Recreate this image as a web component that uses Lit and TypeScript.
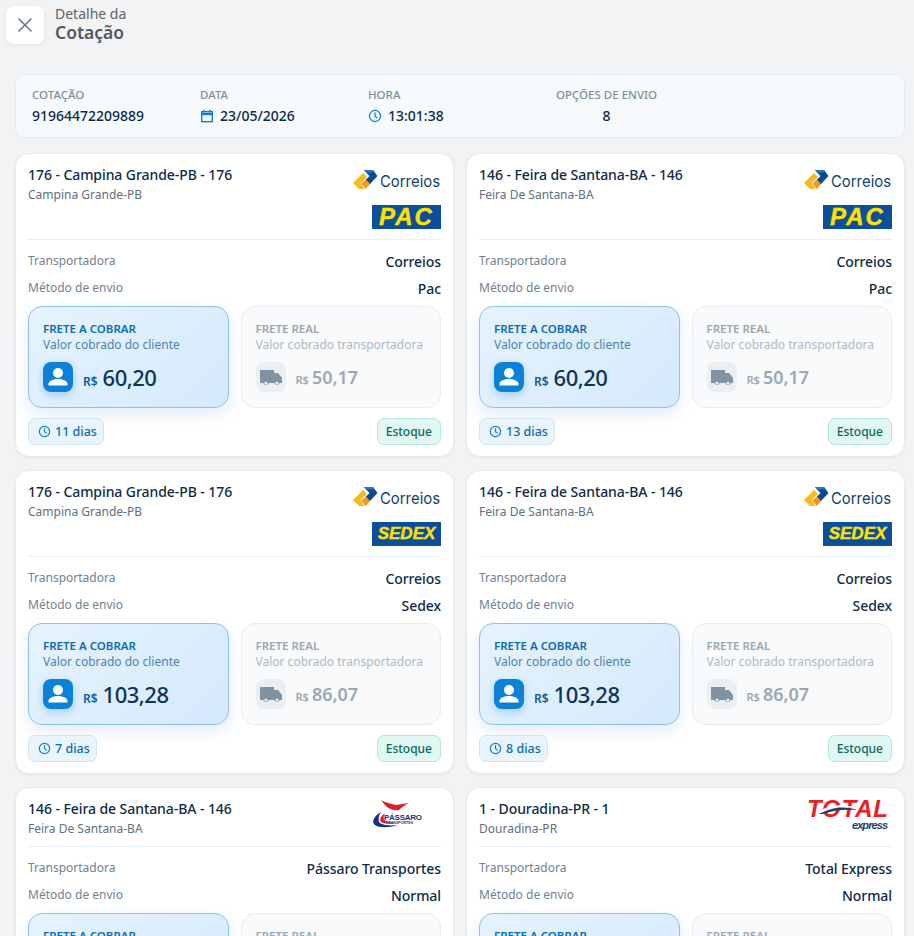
import { LitElement, css, html, svg } from "lit";
import { customElement } from "lit/decorators.js";

type Logo = "pac" | "sedex" | "passaro" | "total";

interface Quote {
  title: string;
  city: string;
  carrier: string;
  method: string;
  charged: string;
  real: string;
  days: string;
  logo: Logo;
}

const quotes: Quote[] = [
  { title: "176 - Campina Grande-PB - 176", city: "Campina Grande-PB", carrier: "Correios", method: "Pac", charged: "60,20", real: "50,17", days: "11 dias", logo: "pac" },
  { title: "146 - Feira de Santana-BA - 146", city: "Feira De Santana-BA", carrier: "Correios", method: "Pac", charged: "60,20", real: "50,17", days: "13 dias", logo: "pac" },
  { title: "176 - Campina Grande-PB - 176", city: "Campina Grande-PB", carrier: "Correios", method: "Sedex", charged: "103,28", real: "86,07", days: "7 dias", logo: "sedex" },
  { title: "146 - Feira de Santana-BA - 146", city: "Feira De Santana-BA", carrier: "Correios", method: "Sedex", charged: "103,28", real: "86,07", days: "8 dias", logo: "sedex" },
  { title: "146 - Feira de Santana-BA - 146", city: "Feira De Santana-BA", carrier: "Pássaro Transportes", method: "Normal", charged: "71,40", real: "59,50", days: "9 dias", logo: "passaro" },
  { title: "1 - Douradina-PR - 1", city: "Douradina-PR", carrier: "Total Express", method: "Normal", charged: "68,10", real: "56,75", days: "10 dias", logo: "total" },
];

const clock = (size: number) => html`<svg width=${size} height=${size} viewBox="0 0 24 24" fill="none" stroke="#0b7fd6" stroke-width="2.2" stroke-linecap="round">
  <circle cx="12" cy="12" r="9.5"></circle><path d="M12 6.5V12.5L15.5 15"></path>
</svg>`;

const correios = svg`<svg width="88" height="22" viewBox="0 0 88 22">
  <path d="M0 14 10 4 14 8 7.500 14 11.500 20H6Z" fill="#f9b91c"></path>
  <path d="M8.500 14.500 14 9.500 18 14 12.500 20Z" fill="#f7941d"></path>
  <path d="M11 1H20L24.500 7 17 15 13 10.500 16.500 7 13.500 4Z" fill="#0b4a8f"></path>
  <path d="M11 1H20L21.500 3 14 4Z" fill="#1f78c8"></path>
  <text x="27" y="18" font-family="Inter, 'Noto Sans', sans-serif" font-size="16" fill="#0d3f6e" textLength="60" lengthAdjust="spacingAndGlyphs">Correios</text>
</svg>`;

const passaro = svg`<svg width="52" height="31" viewBox="0 0 52 31">
  <path d="M9 1C14 4 20 5 24 6C29 5 33 5 37 4C33 6 30 8 27 11C22 12 18 10 15 8C13 6 11 4 9 1Z" fill="#e01f26"></path>
  <path d="M9 13C2 17-1 23 3 26C7 29 17 29 26 26C17 27 9 26 7 23C6 20 7 16 9 13Z" fill="#1b2f7c"></path>
  <path d="M13 14C9 17 7 20 9 23C12 25 18 25 24 24C18 24 13 23 12 20C11 18 12 16 13 14Z" fill="#d8232a"></path>
  <text x="12" y="20.500" font-family="'Liberation Sans', sans-serif" font-size="8" font-weight="700" fill="#1b2f7c" textLength="38">PÁSSARO</text>
  <text x="14" y="25" font-family="'Liberation Sans', sans-serif" font-size="3.500" font-weight="700" fill="#1b2f7c" textLength="27">TRANSPORTES</text>
</svg>`;

const total = svg`<svg width="82" height="32" viewBox="0 0 82 32">
  <text x="0" y="18" font-family="'Liberation Sans', sans-serif" font-size="24" font-weight="700" font-style="italic" fill="#ee1c25" textLength="81">TOTAL</text>
  <path d="M12 15C24 7 38 7 50 11C38 10 26 11 16 15Z" fill="#17406f"></path>
  <path d="M12 12C24 5 38 5 50 9L50 10C38 7 26 8 14 14Z" fill="#fff"></path>
  <text x="45" y="30" font-family="'Liberation Sans', sans-serif" font-size="11" font-weight="700" font-style="italic" fill="#17406f" textLength="36">express</text>
</svg>`;

@customElement("app-root")
export class AppRoot extends LitElement {
  static styles = css`
    :host {
      display: block;
      height: 936px;
      overflow: hidden;
      background: #f1f3f5;
      font-family: "Noto Sans", sans-serif;
      color: #0d2b45;
    }
    .page {
      padding: 6px 9px 0 15px;
    }
    header {
      display: flex;
      gap: 11px;
      margin-left: -9px;
      height: 68px;
    }
    .close {
      width: 38px;
      height: 38px;
      background: #fff;
      border-radius: 8px;
      box-shadow: 0 1px 4px rgba(20, 40, 60, 0.07);
      display: flex;
      align-items: center;
      justify-content: center;
    }
    .heading {
      margin-top: -1px;
      line-height: 1;
    }
    .heading small {
      display: block;
      font-size: 14px;
      line-height: 17px;
      color: #5f6468;
    }
    .heading strong {
      display: block;
      font-size: 17.5px;
      line-height: 21px;
      font-weight: 600;
      color: #54585c;
    }
    .summary {
      display: grid;
      grid-template-columns: 168px 168px 188px auto;
      justify-content: start;
      height: 64px;
      box-sizing: border-box;
      padding: 12px 16px 0;
      background: #f6fafd;
      border: 1px solid #e3ecf3;
      border-radius: 10px;
      margin-bottom: 15px;
    }
    .summary label {
      display: block;
      font-size: 11.5px;
      line-height: 15px;
      font-weight: 500;
      color: #7d8f9f;
    }
    .summary div div {
      display: flex;
      align-items: center;
      gap: 6px;
      margin-top: 4px;
      font-size: 14px;
      line-height: 20px;
      font-weight: 500;
      color: #0d2b45;
    }
    .summary .center {
      text-align: center;
    }
    .summary .center div {
      justify-content: center;
    }
    .grid {
      display: grid;
      grid-template-columns: 1fr 1fr;
      gap: 13px 12px;
    }
    .card {
      box-sizing: border-box;
      background: #fff;
      border: 1px solid #e4ebf1;
      border-radius: 14px;
      padding: 11px 12px;
      box-shadow: 0 1px 3px rgba(40, 70, 100, 0.06);
    }
    .top {
      display: flex;
      justify-content: space-between;
      align-items: flex-start;
      padding-bottom: 8px;
      border-bottom: 1px solid #e9eff4;
      margin-bottom: 8px;
    }
    .top h3 {
      margin: 0;
      font-size: 14px;
      line-height: 20px;
      font-weight: 500;
      letter-spacing: -0.07px;
      color: #0d2b45;
    }
    .top p {
      margin: 2px 0 0;
      font-size: 12px;
      line-height: 16px;
      color: #5e7080;
    }
    .logos {
      display: flex;
      flex-direction: column;
      align-items: flex-end;
      gap: 14px;
      margin: 4px 0 2px;
    }
    .badge {
      width: 69px;
      height: 24px;
      background: #0b4f9c;
      color: #ffe100;
      font-family: "Liberation Sans", sans-serif;
      font-weight: 700;
      font-style: italic;
      font-size: 24px;
      line-height: 24px;
      text-align: center;
      letter-spacing: 2px;
      -webkit-text-stroke: 0.4px #ffe100;
    }
    .badge.sedex {
      font-size: 17px;
      letter-spacing: 0;
    }
    .logos.free {
      margin: 0;
      height: 39px;
    }
    .logos.passaro {
      margin-right: 17px;
    }
    .logos.total {
      margin-right: 3px;
    }
    .row {
      display: flex;
      justify-content: space-between;
      height: 27px;
      align-items: center;
    }
    .row span {
      font-size: 12px;
      color: #6f8292;
      margin-top: -2px;
    }
    .row b {
      font-size: 14px;
      font-weight: 500;
      letter-spacing: -0.07px;
      color: #0d2b45;
    }
    .panels {
      display: grid;
      grid-template-columns: 1fr 1fr;
      gap: 12px;
      margin-top: 4px;
    }
    .panel {
      box-sizing: border-box;
      height: 102px;
      border-radius: 14px;
      padding: 14px 14px 0;
      border: 1px solid #e6ecf1;
      background: #f8fafc;
    }
    .panel.main {
      border-color: #8fc0e8;
      background: linear-gradient(135deg, #e6f3fe, #d5e9fd);
      box-shadow: 0 6px 16px rgba(40, 120, 200, 0.14);
    }
    .panel h4 {
      margin: 0;
      font-size: 11.5px;
      line-height: 16px;
      font-weight: 600;
      color: #9aa8b4;
    }
    .panel p {
      margin: 0;
      font-size: 12px;
      line-height: 16px;
      color: #adb9c4;
    }
    .panel.main h4 {
      color: #0a6cb5;
    }
    .panel.main p {
      color: #4a84ae;
    }
    .amount {
      display: flex;
      align-items: center;
      gap: 10px;
      margin-top: 9px;
    }
    .tile {
      width: 30px;
      height: 30px;
      border-radius: 8px;
      display: flex;
      align-items: center;
      justify-content: center;
      background: #eceff2;
    }
    .main .tile {
      background: #0b82d8;
      box-shadow: 0 3px 8px rgba(11, 130, 216, 0.3);
    }
    .amount small {
      font-size: 11px;
      font-weight: 600;
      color: #9aa8b4;
      margin-right: 3px;
    }
    .amount em {
      font-style: normal;
      font-size: 18px;
      font-weight: 600;
      color: #9aa8b4;
    }
    .main .amount small {
      font-size: 12px;
      margin-right: 5px;
      color: #0a5c9c;
    }
    .main .amount em {
      font-size: 22px;
      font-weight: 500;
      letter-spacing: -0.5px;
      color: #0b3556;
    }
    .foot {
      display: flex;
      justify-content: space-between;
      margin-top: 10px;
    }
    .chip {
      display: flex;
      align-items: center;
      gap: 4px;
      box-sizing: border-box;
      height: 27px;
      padding: 0 6px 0 9px;
      border-radius: 7px;
      font-size: 12.5px;
      font-weight: 500;
      color: #0a6cb5;
      background: #eaf4fc;
      border: 1px solid #cfe4f5;
    }
    .chip.stock {
      padding: 0 8px;
      font-size: 12px;
      font-weight: 500;
      color: #066b60;
      background: #e0f7f2;
      border-color: #b3e8dc;
    }
  `;

  renderLogo(logo: Logo) {
    if (logo === "pac" || logo === "sedex") {
      return html`<div class="logos">
        ${correios}
        <div class="badge ${logo}">${logo.toUpperCase()}</div>
      </div>`;
    }
    return html`<div class="logos free ${logo}">${logo === "total" ? total : passaro}</div>`;
  }

  renderCard(q: Quote) {
    return html`<div class="card">
      <div class="top">
        <div>
          <h3>${q.title}</h3>
          <p>${q.city}</p>
        </div>
        ${this.renderLogo(q.logo)}
      </div>
      <div class="row"><span>Transportadora</span><b>${q.carrier}</b></div>
      <div class="row"><span>Método de envio</span><b>${q.method}</b></div>
      <div class="panels">
        <div class="panel main">
          <h4>FRETE A COBRAR</h4>
          <p>Valor cobrado do cliente</p>
          <div class="amount">
            <div class="tile">
              <svg width="24" height="24" viewBox="0 0 24 24" fill="#fff"><circle cx="12" cy="8" r="5"></circle><path d="M2.500 20.500v-1.500C2.500 15.500 8 14 12 14s9.500 1.500 9.500 5v1.500Z"></path></svg>
            </div>
            <div><small>R$</small><em>${q.charged}</em></div>
          </div>
        </div>
        <div class="panel">
          <h4>FRETE REAL</h4>
          <p>Valor cobrado transportadora</p>
          <div class="amount">
            <div class="tile">
              <svg width="24" height="24" viewBox="0 0 24 24" fill="#7f93a5"><path d="M1 5h14v3h4l4 5v5h-2.200a3 3 0 0 1-5.600 0H9.800a3 3 0 0 1-5.600 0H1Z"></path><circle cx="7" cy="18" r="1.600" fill="#eceff2"></circle><circle cx="18" cy="18" r="1.600" fill="#eceff2"></circle></svg>
            </div>
            <div><small>R$</small><em>${q.real}</em></div>
          </div>
        </div>
      </div>
      <div class="foot">
        <div class="chip">${clock(13)}${q.days}</div>
        <div class="chip stock">Estoque</div>
      </div>
    </div>`;
  }

  render() {
    return html`<div class="page">
      <header>
        <div class="close">
          <svg width="16" height="16" viewBox="0 0 16 16" stroke="#5e7a8e" stroke-width="1.600" stroke-linecap="round"><path d="M2 2 14 14M14 2 2 14"></path></svg>
        </div>
        <div class="heading"><small>Detalhe da</small><strong>Cotação</strong></div>
      </header>
      <section class="summary">
        <div><label>COTAÇÃO</label><div>91964472209889</div></div>
        <div>
          <label>DATA</label>
          <div><svg width="14" height="14" viewBox="0 0 14 14" fill="none" stroke="#0b7fd6" stroke-width="1.400"><rect x="1.700" y="2.700" width="10.600" height="10"></rect><path d="M1.700 5h10.600" stroke-width="2.400"></path><path d="M4 0.800V3M10 0.800V3"></path></svg>23/05/2026</div>
        </div>
        <div><label>HORA</label><div>${clock(14)}13:01:38</div></div>
        <div class="center"><label>OPÇÕES DE ENVIO</label><div>8</div></div>
      </section>
      <div class="grid">${quotes.map((q) => this.renderCard(q))}</div>
    </div>`;
  }
}
